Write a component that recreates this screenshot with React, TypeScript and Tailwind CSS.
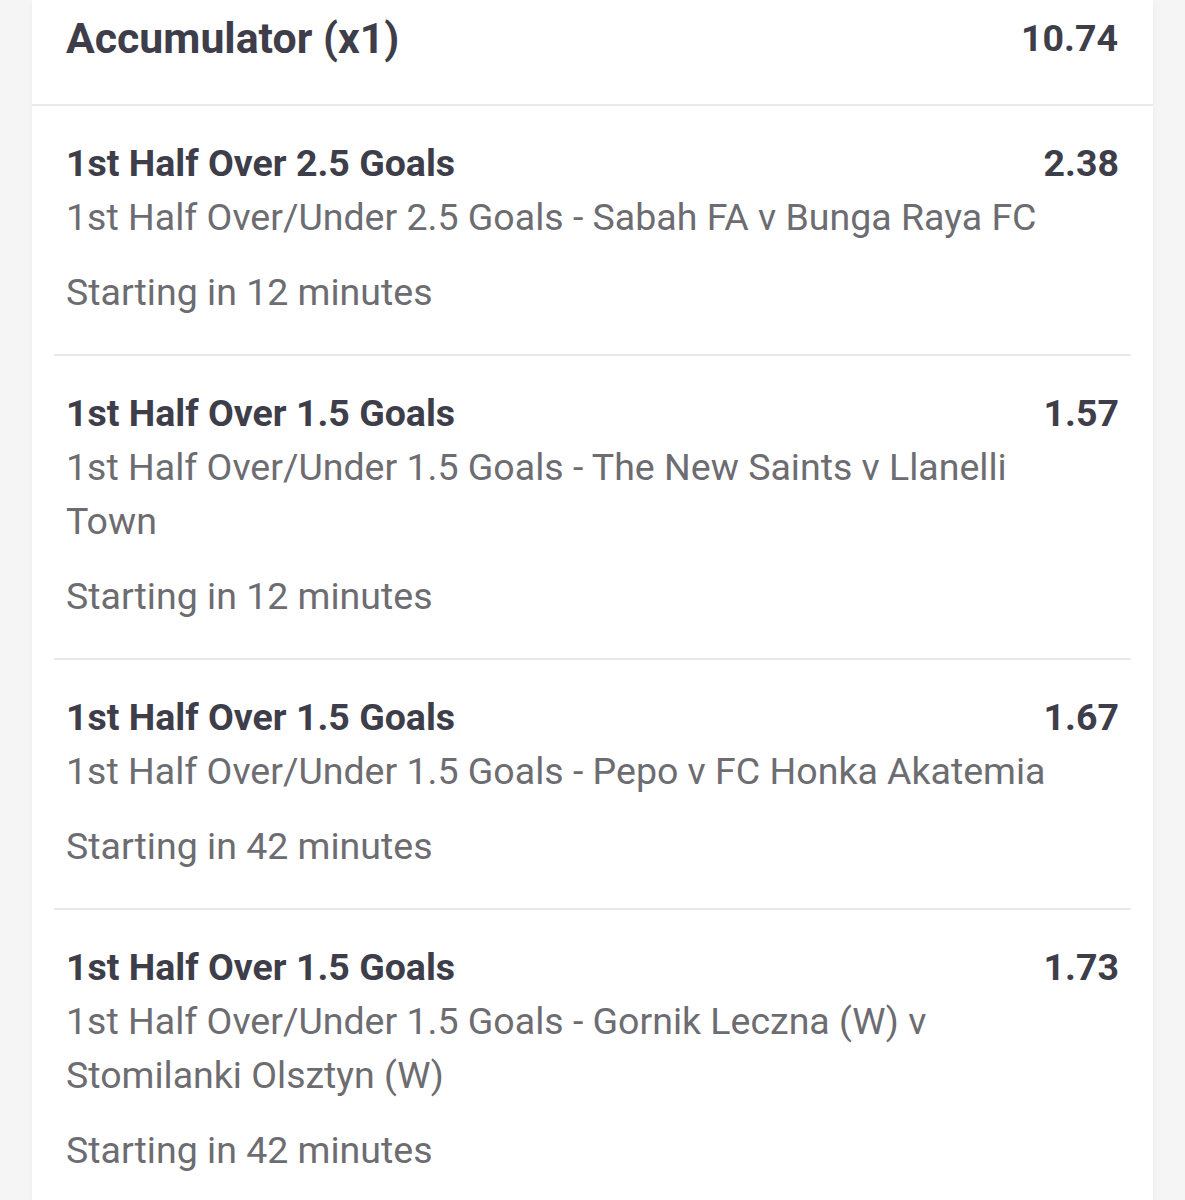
import React from "react";

type Leg = {
  id: number;
  selection: string;
  market: string;
  startsIn: string;
  odds: string;
};

const legs: Leg[] = [
  {
    id: 1,
    selection: "1st Half Over 2.5 Goals",
    market: "1st Half Over/Under 2.5 Goals - Sabah FA v Bunga Raya FC",
    startsIn: "Starting in 12 minutes",
    odds: "2.38",
  },
  {
    id: 2,
    selection: "1st Half Over 1.5 Goals",
    market: "1st Half Over/Under 1.5 Goals - The New Saints v Llanelli Town",
    startsIn: "Starting in 12 minutes",
    odds: "1.57",
  },
  {
    id: 3,
    selection: "1st Half Over 1.5 Goals",
    market: "1st Half Over/Under 1.5 Goals - Pepo v FC Honka Akatemia",
    startsIn: "Starting in 42 minutes",
    odds: "1.67",
  },
  {
    id: 4,
    selection: "1st Half Over 1.5 Goals",
    market:
      "1st Half Over/Under 1.5 Goals - Gornik Leczna (W) v Stomilanki Olsztyn (W)",
    startsIn: "Starting in 42 minutes",
    odds: "1.73",
  },
];

const LegRow: React.FC<{ leg: Leg; last: boolean }> = ({ leg, last }) => (
  <div
    className={`mx-[22px] px-3 pt-[30px] pb-[35px] ${
      last ? "" : "border-b-2 border-[#e9e9ec]"
    }`}
  >
    <div className="flex justify-between items-start gap-6">
      <p className="text-[37.5px] leading-[54px] font-bold text-[#3e3d4a]">
        {leg.selection}
      </p>
      <span className="text-[37.5px] leading-[54px] font-bold text-[#3e3d4a]">
        {leg.odds}
      </span>
    </div>
    <p className="text-[37.5px] leading-[54px] text-[#6c6c71] pr-[40px]">
      {leg.market}
    </p>
    <p className="mt-[21px] text-[37.5px] leading-[54px] text-[#6c6c71]">
      {leg.startsIn}
    </p>
  </div>
);

export default function App() {
  return (
    <div
      className="min-h-[1200px] bg-[#f5f5f6] px-[32px] overflow-hidden"
      style={{ fontFamily: "Roboto, 'Noto Sans', sans-serif" }}
    >
      <div className="bg-white min-h-[1200px] shadow-[0_0_6px_rgba(0,0,0,0.04)]">
        <div className="flex justify-between items-center pl-[34px] pr-[35px] pt-[11px] pb-[39px] border-b-2 border-[#e9e9ec]">
          <h1 className="text-[42.8px] leading-[54px] font-bold text-[#3e3d4a]">
            Accumulator (x1)
          </h1>
          <span className="text-[37.5px] leading-[54px] font-bold text-[#3e3d4a]">
            10.74
          </span>
        </div>
        {legs.map((leg, i) => (
          <LegRow key={leg.id} leg={leg} last={i === legs.length - 1} />
        ))}
      </div>
    </div>
  );
}
